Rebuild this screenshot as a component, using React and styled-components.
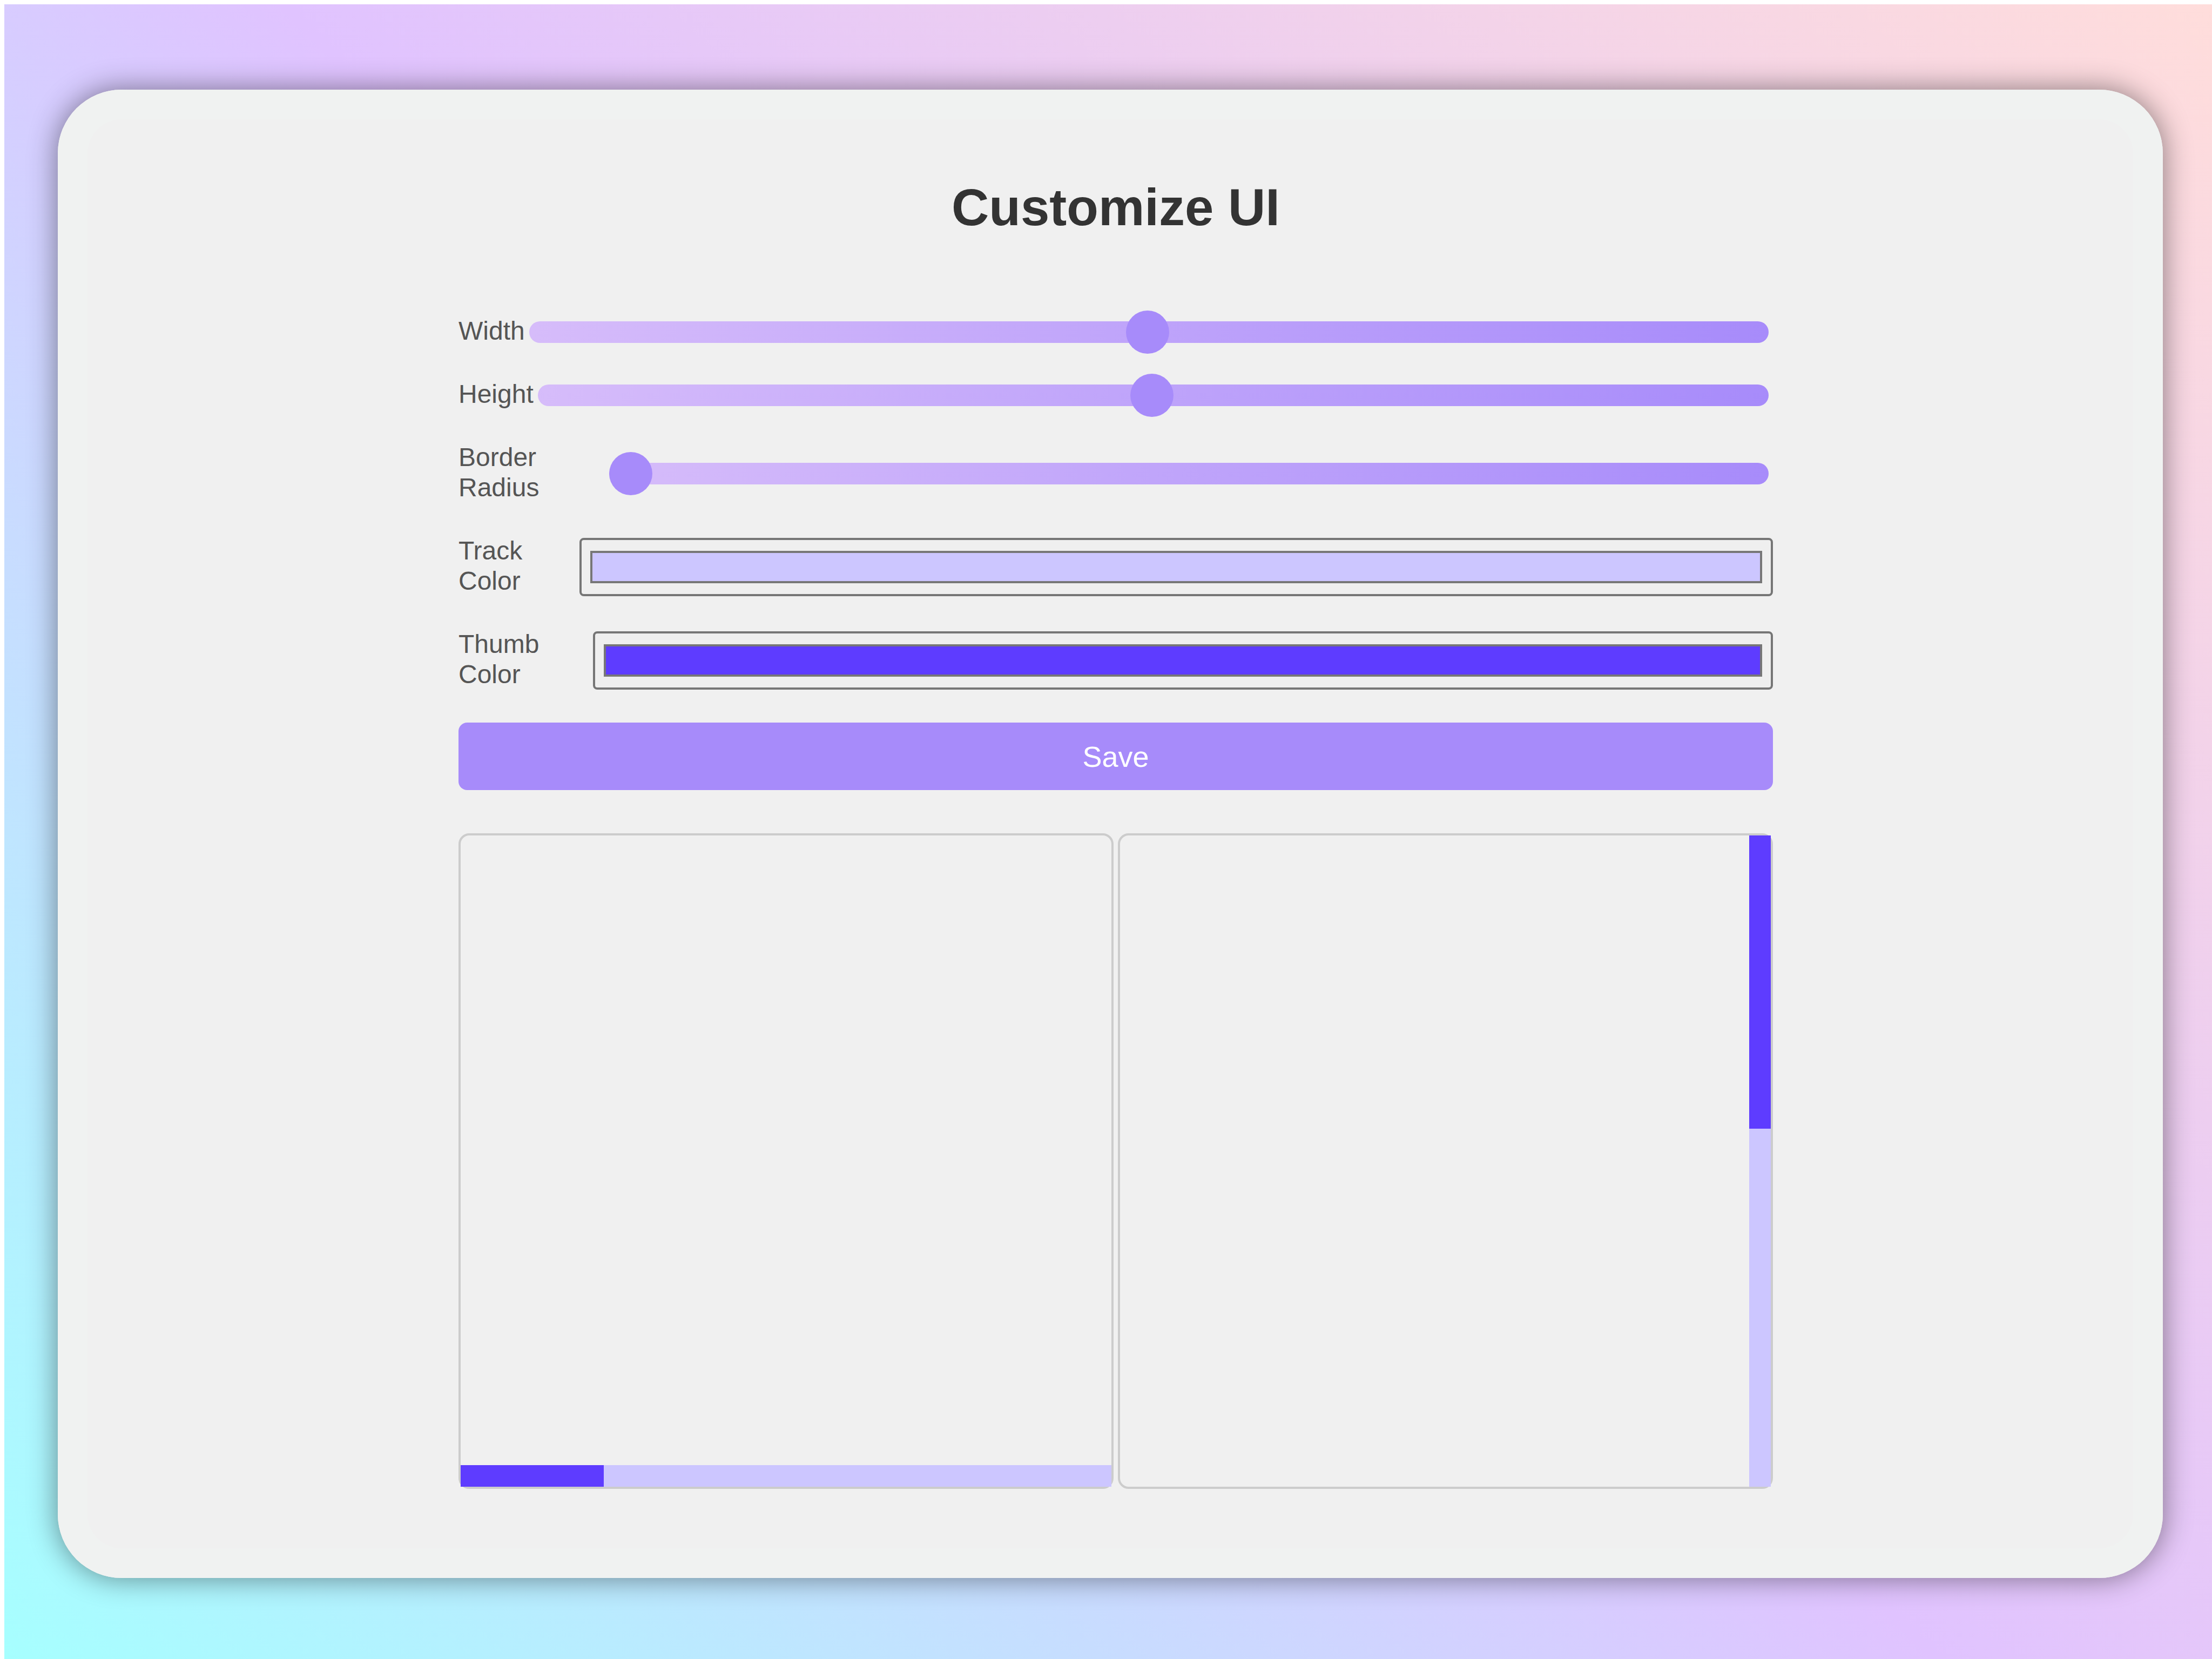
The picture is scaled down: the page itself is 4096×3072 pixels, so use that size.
import React, { useState } from "react";
import styled, { createGlobalStyle } from "styled-components";

const GlobalStyle = createGlobalStyle`
  *, *::before, *::after { box-sizing: border-box; }
  html { background: #fff; overflow: hidden; }
  body {
    margin: 8px 0 0 8px;
    font-family: "Liberation Sans", Arial, Helvetica, sans-serif;
  }
`;

const Page = styled.main`
  display: flex;
  width: 100vw;
  min-height: 100vh;
  padding: 158px 99px;
  background: linear-gradient(45deg, #a6ffff 0%, #e0c3ff 50%, #ffdddb 100%);
`;

const Card = styled.section`
  flex: 1;
  display: flex;
  flex-direction: column;
  padding: 162px 722px 163px 742px;
  border-radius: 118px;
  background: #f0f0f0;
  box-shadow: 0 0 54px rgba(0, 0, 0, 0.46), inset 0 0 0 55px #f0f2f1;
`;

const Title = styled.h1`
  margin: 0 0 145px;
  font-size: 96px;
  line-height: 112px;
  text-align: center;
  color: #333;
`;

const Form = styled.form`
  display: flex;
  flex-direction: column;
  gap: 57px;
`;

const Row = styled.div`
  display: flex;
  align-items: center;
`;

const Label = styled.label`
  padding-bottom: 4px;
  font-size: 48px;
  line-height: 56px;
  color: #555;
`;

const Slider = styled.input.attrs({ type: "range" })`
  appearance: none;
  width: 100%;
  height: 40px;
  margin: 0 8px;
  border-radius: 20px;
  background: linear-gradient(90deg, #d6bcfa, #a78bfa);

  &::-webkit-slider-thumb {
    appearance: none;
    width: 80px;
    height: 80px;
    border-radius: 50%;
    background: #a78bfa;
  }
`;

const ColorField = styled.input.attrs({ type: "color" })`
  appearance: none;
  width: 100%;
  height: 108px;
  padding: 0;
  border: 4px solid #767676;
  border-radius: 8px;
  background: #efefef;

  &::-webkit-color-swatch-wrapper { padding: 20px 16px; }
  &::-webkit-color-swatch {
    border: 4px solid #777;
    border-radius: 0;
  }
`;

const SaveButton = styled.button`
  height: 125px;
  padding: 0;
  border: 0;
  border-radius: 16px;
  background: #a78bfa;
  color: #fff;
  font-family: inherit;
  font-size: 54px;
`;

const Previews = styled.div`
  display: grid;
  grid-template-columns: 1fr 1fr;
  gap: 8px;
  margin-top: 80px;
`;

const Preview = styled.div`
  display: flex;
  align-items: ${(p) => (p.$vertical ? "stretch" : "flex-end")};
  justify-content: flex-end;
  height: 1214px;
  border: 4px solid #ccc;
  border-radius: 20px;
`;

const ScrollTrack = styled.div`
  width: ${(p) => (p.$vertical ? "40px" : "100%")};
  height: ${(p) => (p.$vertical ? "auto" : "40px")};
  background: ${(p) => p.$color};
`;

const ScrollThumb = styled.div`
  width: ${(p) => (p.$vertical ? "100%" : "22%")};
  height: ${(p) => (p.$vertical ? "45%" : "100%")};
  background: ${(p) => p.$color};
`;

function ScrollPreview({ vertical, track, thumb }) {
  return (
    <Preview $vertical={vertical}>
      <ScrollTrack $vertical={vertical} $color={track}>
        <ScrollThumb $vertical={vertical} $color={thumb} />
      </ScrollTrack>
    </Preview>
  );
}

export default function App() {
  const [track, setTrack] = useState("#ccc6ff");
  const [thumb, setThumb] = useState("#5e3cff");

  return (
    <>
      <GlobalStyle />
      <Page>
        <Card>
          <Title>Customize UI</Title>
          <Form onSubmit={(e) => e.preventDefault()}>
            <Row>
              <Label htmlFor="width">Width</Label>
              <Slider id="width" max="1000" defaultValue="499" />
            </Row>
            <Row>
              <Label htmlFor="height">Height</Label>
              <Slider id="height" max="1000" defaultValue="499" />
            </Row>
            <Row>
              <Label htmlFor="radius">Border Radius</Label>
              <Slider id="radius" max="50" defaultValue="0" />
            </Row>
            <Row>
              <Label htmlFor="track">Track Color</Label>
              <ColorField id="track" value={track} onChange={(e) => setTrack(e.target.value)} />
            </Row>
            <Row>
              <Label htmlFor="thumb">Thumb Color</Label>
              <ColorField id="thumb" value={thumb} onChange={(e) => setThumb(e.target.value)} />
            </Row>
            <SaveButton type="submit">Save</SaveButton>
          </Form>
          <Previews>
            <ScrollPreview track={track} thumb={thumb} />
            <ScrollPreview vertical track={track} thumb={thumb} />
          </Previews>
        </Card>
      </Page>
    </>
  );
}
